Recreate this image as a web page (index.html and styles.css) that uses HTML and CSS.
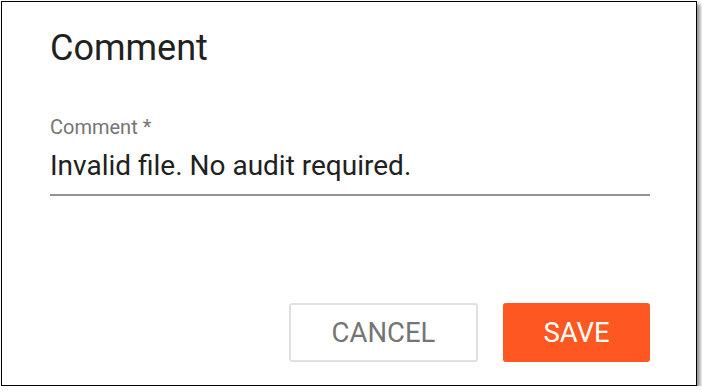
FILE: index.html
```html
<!DOCTYPE html>
<html>
<head>
<meta charset="utf-8">
<link rel="stylesheet" href="styles.css">
</head>
<body>
<div class="dialog">
  <h1 class="title">Comment</h1>
  <div class="field">
    <label class="label">Comment *</label>
    <div class="input">Invalid file. No audit required.</div>
  </div>
  <div class="actions">
    <button class="btn btn-cancel">CANCEL</button>
    <button class="btn btn-save">SAVE</button>
  </div>
</div>
</body>
</html>
```
FILE: styles.css
```css
html, body {
  margin: 0;
  padding: 0;
  background: #ffffff;
}
body {
  padding: 1px 0 0 1px;
  font-family: Roboto, "Liberation Sans", sans-serif;
}
.dialog {
  box-sizing: border-box;
  width: 696px;
  height: 385px;
  border: 1px solid #000;
  box-shadow: 3px 3px 4px rgba(0,0,0,0.45);
  background: #fff;
  padding: 0 46px 0 48px;
  display: flex;
  flex-direction: column;
}
.title {
  margin: 24px 0 0 0;
  font-size: 36px;
  font-weight: 400;
  line-height: 44px;
  color: #212121;
}
.field {
  margin-top: 45px;
  display: flex;
  flex-direction: column;
}
.label {
  font-size: 20px;
  line-height: 24px;
  color: #757575;
}
.input {
  margin-top: 9px;
  font-size: 28px;
  line-height: 36px;
  color: #212121;
  padding-bottom: 10px;
  border-bottom: 2px solid #949494;
}
.actions {
  margin-top: auto;
  margin-bottom: 23px;
  display: flex;
  justify-content: flex-end;
  gap: 25px;
}
.btn {
  box-sizing: border-box;
  height: 59px;
  font-family: Roboto, "Liberation Sans", sans-serif;
  font-size: 27.5px;
  border-radius: 3px;
  cursor: pointer;
}
.btn-cancel {
  width: 189px;
  background: #fff;
  color: #757575;
  border: 2px solid #e0e0e0;
}
.btn-save {
  width: 147px;
  background: #ff5722;
  color: #fff;
  border: none;
}
```
